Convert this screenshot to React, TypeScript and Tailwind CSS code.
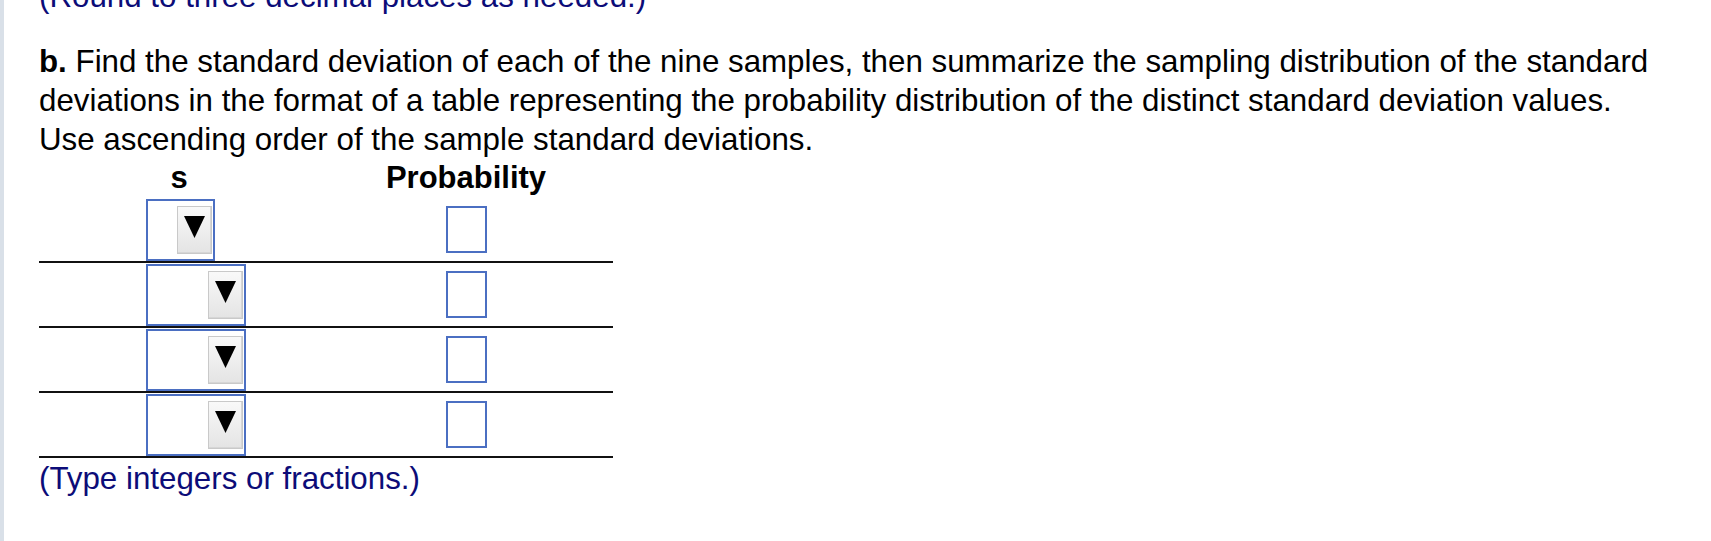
import React from "react";

function Caret() {
  return (
    <svg width="21" height="22" viewBox="0 0 21 22" aria-hidden="true">
      <polygon points="0,0 21,0 10.5,22" fill="#000" />
    </svg>
  );
}

function SelectBox({ narrow }: { narrow?: boolean }) {
  return (
    <div
      className={`${narrow ? "w-[69px]" : "w-[100px]"} h-[62px] border-2 border-[#4b6fc2] bg-white flex items-center justify-end pr-[1px]`}
    >
      <div className="w-[35px] h-[48px] border border-[#c9c9c9] bg-gradient-to-b from-[#f9f9f9] to-[#e4e4e4] flex justify-center items-start pt-[9px] shadow-[inset_-1px_-1px_0_#d6d6d6]">
        <Caret />
      </div>
    </div>
  );
}

function Row({ first, narrow }: { first?: boolean; narrow?: boolean }) {
  return (
    <div
      className={`grid grid-cols-[280px_294px] h-[65px] border-b-2 border-[#111] ${first ? "mt-[2px]" : ""}`}
    >
      <div className="flex items-end pl-[107px]">
        <SelectBox narrow={narrow} />
      </div>
      <div className="flex items-center justify-center">
        <div className="w-[41px] h-[47px] border-2 border-[#4b6fc2] bg-white" />
      </div>
    </div>
  );
}

export default function App() {
  return (
    <div className="h-[541px] w-[1711px] overflow-hidden bg-white border-l-4 border-[#d9e0e8] font-['Liberation_Sans',Arial,sans-serif] text-[31.3px] leading-[39px] text-black">
      <div className="pl-[35px]">
        <div className="-mt-[23px] text-[#0c0c78] whitespace-nowrap">
          (Round to three decimal places as needed.)
        </div>
        <div className="mt-[26px] whitespace-nowrap">
          <div>
            <b>b.</b> Find the standard deviation of each of the nine samples, then summarize the sampling distribution of the standard
          </div>
          <div>
            deviations in the format of a table representing the probability distribution of the distinct standard deviation values.
          </div>
          <div>Use ascending order of the sample standard deviations.</div>
        </div>
        <div className="w-[574px]">
          <div className="grid grid-cols-[280px_294px] mt-[1px] font-bold text-[31px] leading-[36px]">
            <div className="text-center">s</div>
            <div className="text-center">Probability</div>
          </div>
          <Row first narrow />
          <Row />
          <Row />
          <Row />
        </div>
        <div className="mt-[1px] text-[#0c0c78] whitespace-nowrap">
          (Type integers or fractions.)
        </div>
      </div>
    </div>
  );
}
